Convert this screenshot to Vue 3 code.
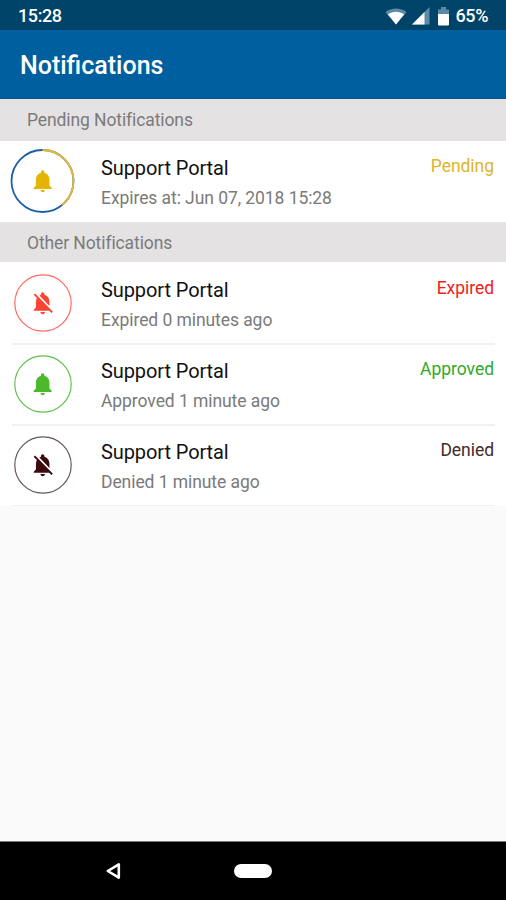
<script setup>
const BELL =
  'M12 22c1.1 0 2-.9 2-2h-4c0 1.1.9 2 2 2zm6-6v-5c0-3.07-1.63-5.64-4.5-6.32V4c0-.83-.67-1.5-1.5-1.5s-1.5.67-1.5 1.5v.68C7.64 5.36 6 7.92 6 11v5l-2 2v1h16v-1l-2-2z'
const BELL_OFF =
  'M20 18.69L7.84 6.14 5.27 3.49 4 4.76l2.8 2.8v.01c-.52.99-.8 2.16-.8 3.42v5l-2 2v1h13.73l2 2L21 19.72l-1-1.03zM12 22c1.11 0 2-.89 2-2h-4c0 1.11.89 2 2 2zm6-7.32V11c0-3.08-1.64-5.64-4.5-6.32V4c0-.83-.67-1.5-1.5-1.5s-1.5.67-1.5 1.5v.68c-.15.03-.29.08-.42.12-.1.03-.2.07-.3.11h-.01c-.01 0-.01 0-.02.01-.23.09-.46.2-.68.31 0 0-.01 0-.01.01L18 14.68z'

const sections = [
  {
    title: 'Pending Notifications',
    items: [
      { kind: 'pending', name: 'Support Portal', detail: 'Expires at: Jun 07, 2018 15:28', status: 'Pending', icon: BELL },
    ],
  },
  {
    title: 'Other Notifications',
    items: [
      { kind: 'expired', name: 'Support Portal', detail: 'Expired 0 minutes ago', status: 'Expired', icon: BELL_OFF },
      { kind: 'approved', name: 'Support Portal', detail: 'Approved 1 minute ago', status: 'Approved', icon: BELL },
      { kind: 'denied', name: 'Support Portal', detail: 'Denied 1 minute ago', status: 'Denied', icon: BELL_OFF },
    ],
  },
]
</script>

<template>
  <div class="screen">
    <div class="status-bar">
      <span class="clock">15:28</span>
      <div class="indicators">
        <svg class="wifi" width="22" height="18" viewBox="0 0 22 18">
          <path d="M.5 5.2C6.5 .2 15.5 .2 21.5 5.2L11 17.5z" fill="#5c8ba8" />
          <path d="M2.8 7.3C8 3.8 14 3.8 19.2 7.3L11 17.5z" fill="#fff" />
        </svg>
        <svg class="signal" width="18" height="18" viewBox="0 0 18 18">
          <path d="M0 17.5L17.5 0v17.5z" fill="#5c8ba8" />
          <path d="M0 17.5L12.5 5v12.5z" fill="#fff" />
        </svg>
        <svg class="battery" width="11" height="19" viewBox="0 0 11 19">
          <path d="M0 7V2.5h3V0h5v2.5h3V7z" fill="#5c8ba8" />
          <path d="M0 7h11v10.5a1 1 0 0 1-1 1H1a1 1 0 0 1-1-1z" fill="#fff" />
        </svg>
        <span class="percent">65%</span>
      </div>
    </div>

    <header class="app-bar"><h1>Notifications</h1></header>

    <main class="content">
      <section v-for="section in sections" :key="section.title" class="group">
        <h2 class="section-title">{{ section.title }}</h2>
        <ul class="list">
          <li v-for="item in section.items" :key="item.kind" class="row" :class="item.kind">
            <svg class="badge" width="66" height="66" viewBox="0 0 66 66">
              <template v-if="item.kind === 'pending'">
                <circle class="ring-rest" cx="32.5" cy="33" r="31" />
                <circle
                  class="ring-progress"
                  cx="32.5"
                  cy="33"
                  r="31"
                  pathLength="360"
                  stroke-dasharray="141 219"
                  transform="rotate(-90 32.5 33)"
                />
              </template>
              <circle v-else class="ring" cx="33" cy="33" r="28.2" />
              <path class="bell" :d="item.icon" transform="translate(19.2 19.5) scale(1.125)" />
            </svg>
            <div class="text">
              <p class="name">{{ item.name }}</p>
              <p class="detail">{{ item.detail }}</p>
            </div>
            <span class="state">{{ item.status }}</span>
          </li>
        </ul>
      </section>
    </main>

    <nav class="nav-bar">
      <svg class="back" width="16" height="18" viewBox="0 0 16 18">
        <path d="M13.8 2.4v13.2L2.8 9z" fill="none" stroke="#fff" stroke-width="2.6" stroke-linejoin="round" />
      </svg>
      <span class="home"></span>
    </nav>
  </div>
</template>

<style>
body {
  margin: 0;
}
</style>

<style scoped>
.screen {
  display: flex;
  flex-direction: column;
  width: 506px;
  height: 900px;
  overflow: hidden;
  background: #fafafa;
  font-family: Roboto, sans-serif;
}
h1,
h2,
p,
ul {
  margin: 0;
  padding: 0;
}
.status-bar {
  flex: none;
  display: flex;
  align-items: center;
  justify-content: space-between;
  box-sizing: border-box;
  height: 30px;
  padding: 2px 18px 0;
  background: #004368;
  color: #fff;
  font-size: 18px;
  font-weight: 500;
  letter-spacing: -0.4px;
  line-height: 28px;
}
.indicators {
  display: flex;
  align-items: center;
}
.signal {
  margin-left: 5px;
}
.battery {
  margin: 0 6px 0 8px;
}
.app-bar {
  flex: none;
  box-sizing: border-box;
  height: 69px;
  padding: 0 20px;
  border-bottom: 1px solid #0a5391;
  background: #00609f;
  color: #fff;
}
.app-bar h1 {
  font-size: 25px;
  font-weight: 500;
  line-height: 71px;
}
.content {
  flex: 1;
}
.section-title {
  height: 42px;
  padding-left: 27px;
  background: #e4e2e3;
  color: #7b7a7b;
  font-size: 17.5px;
  font-weight: 400;
  letter-spacing: -0.1px;
  line-height: 42px;
}
.group + .group .section-title {
  height: 40px;
}
.list {
  list-style: none;
}
.row {
  display: flex;
  position: relative;
  box-sizing: border-box;
  height: 81px;
  padding: 8px 12px 0 10px;
  background: #fff;
}
.row::after {
  content: '';
  position: absolute;
  right: 11px;
  bottom: -2px;
  left: 12px;
  z-index: 1;
  height: 2px;
  background: #f0f0f0;
}
.row.pending {
  padding-top: 7px;
}
.row.pending::after {
  display: none;
}
.row.denied {
  height: 82px;
}
.row.denied::after {
  bottom: 0;
  height: 1px;
}
.badge {
  flex: none;
  fill: none;
}
.ring,
.ring-rest,
.ring-progress {
  fill: none;
}
.ring {
  stroke-width: 1.2;
}
.ring-rest,
.ring-progress {
  stroke-width: 1.8;
}
.ring-rest {
  stroke: #1b60a5;
}
.ring-progress {
  stroke: #e8b92c;
}
.text {
  flex: 1;
  padding-left: 25px;
}
.name {
  height: 38px;
  color: #111;
  font-size: 20px;
  letter-spacing: -0.1px;
  line-height: 40px;
}
.detail {
  height: 24px;
  color: #7a7a7a;
  font-size: 17.5px;
  letter-spacing: -0.07px;
  line-height: 24px;
}
.state {
  font-size: 17.5px;
  letter-spacing: -0.04px;
  line-height: 36px;
}
.pending .bell {
  fill: #e5b400;
}
.pending .state {
  color: #dfb52b;
}
.expired .bell {
  fill: #ff4433;
}
.expired .ring {
  stroke: #ff6a60;
}
.expired .state {
  color: #f51a1a;
}
.approved .bell {
  fill: #4cb82c;
}
.approved .ring {
  stroke: #62c04a;
}
.approved .state {
  color: #32a928;
}
.denied .bell {
  fill: #3c0a0e;
}
.denied .ring {
  stroke: #6a5557;
}
.denied .state {
  color: #442a2d;
}
.nav-bar {
  flex: none;
  display: grid;
  grid-template-columns: 105px 1fr 105px;
  align-items: center;
  box-sizing: border-box;
  height: 59px;
  border-top: 1px solid #777;
  background: #000;
}
.back {
  margin-left: 105px;
}
.home {
  justify-self: center;
  width: 38px;
  height: 14px;
  border-radius: 7px;
  background: #fff;
}
</style>
